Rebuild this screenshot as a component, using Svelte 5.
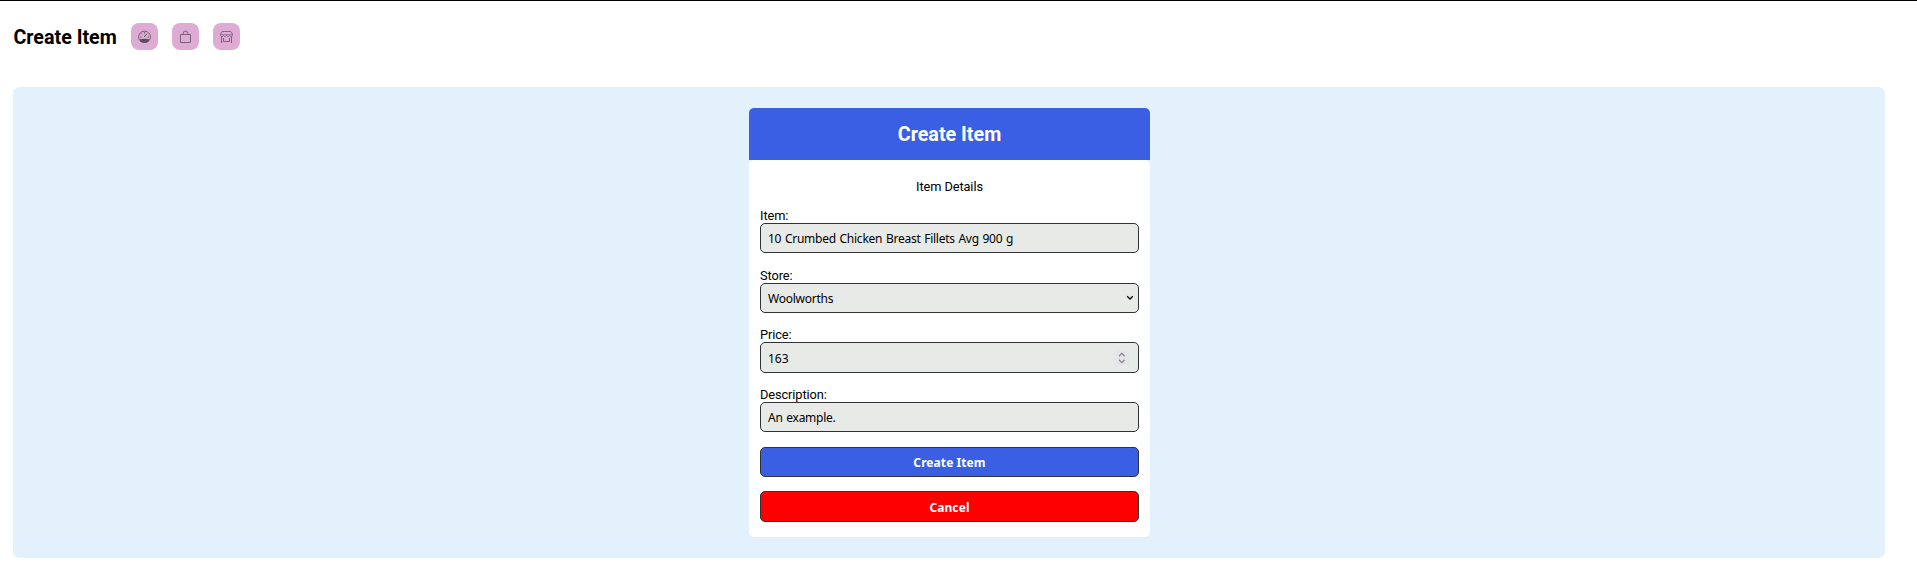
<script>
  let item = $state('10 Crumbed Chicken Breast Fillets Avg 900 g');
  let store = $state('Woolworths');
  let price = $state('163');
  let description = $state('An example.');
</script>

<div class="page">
  <header>
    <h1>Create Item</h1>
    <nav>
      <button class="nav" aria-label="Dashboard">
        <svg width="13" height="13" viewBox="0 0 13 13" fill="none" stroke="#55505c">
          <path d="M1.300 9.600A5.900 5.700 0 1 1 11.700 9.600" stroke-width=".8" />
          <path d="M1 9.400Q6.500 8 12 9.400L10.700 11.500Q9 13 6.500 13Q4 13 2.300 11.500Z" fill="#55505c" stroke="none" />
          <path d="M6.200 7 9 3.700" stroke-width="1" />
          <path d="M6.500 2v1.500M3.200 3.500l.9.900M2 7h1.500M9.700 7h1.300" stroke-width=".8" />
        </svg>
      </button>
      <button class="nav" aria-label="Items">
        <svg width="13" height="13" viewBox="0 0 13 13" fill="none" stroke="#6c5a72" stroke-width=".9">
          <path d="M1.500 4.500h10v8h-10Z" />
          <path d="M4.300 4.500V3.300a2.200 2.200 0 0 1 4.400 0v1.200" />
        </svg>
      </button>
      <button class="nav" aria-label="Stores">
        <svg width="13" height="13" viewBox="0 0 13 13" fill="none" stroke="#6c5a72">
          <path d="M2.200 1.500h8.600l1.700 2.700v1q-.4 1.200-1.500 1.200T9.500 5.500Q9.100 6.400 8 6.400T6.500 5.500Q6.100 6.400 5 6.400T3.500 5.500Q3.100 6.400 2 6.400T.5 5.200v-1Z" stroke-width=".8" />
          <path d="M.8 4.500h11.400" stroke-width=".5" />
          <path d="M1.500 6.500v6.500M11.500 6.500v6.500" stroke-width=".9" />
          <path d="M3.500 8v3.500h6V8" stroke-width=".9" />
        </svg>
      </button>
    </nav>
  </header>

  <main>
    <section class="card">
      <h2>Create Item</h2>
      <form onsubmit={(e) => e.preventDefault()}>
        <p>Item Details</p>
        <div class="field">
          <label for="item">Item:</label>
          <input id="item" bind:value={item} />
        </div>
        <div class="field">
          <label for="store">Store:</label>
          <div class="control">
            <select id="store" bind:value={store}><option>Woolworths</option></select>
            <svg class="chevron" width="8" height="6" viewBox="0 0 8 6" fill="none" stroke="#111" stroke-width="1.400">
              <path d="M1.200 1.200 4 4l2.800-2.800" />
            </svg>
          </div>
        </div>
        <div class="field price">
          <label for="price">Price:</label>
          <div class="control">
            <input id="price" inputmode="decimal" bind:value={price} />
            <svg class="spinner" width="15" height="16" viewBox="0 0 15 16" fill="none" stroke="#85828c" stroke-width="1.300">
              <rect width="15" height="16" fill="#e6e5ea" stroke="none" />
              <path d="M5 6.200 7.800 3.400l2.800 2.800M5 9.800l2.800 2.800 2.800-2.800" />
            </svg>
          </div>
        </div>
        <div class="field">
          <label for="description">Description:</label>
          <input id="description" bind:value={description} />
        </div>
        <button class="action create" type="submit">Create Item</button>
        <button class="action cancel" type="button">Cancel</button>
      </form>
    </section>
  </main>
</div>

<style>
  :global(body) {
    margin: 0;
    background: #fff;
  }
  .page {
    box-sizing: border-box;
    height: 577px;
    border-top: 1px solid #000;
    padding: 22px 32px 0 13px;
    font-family: Roboto, sans-serif;
    color: #000;
  }
  header {
    display: flex;
    align-items: center;
    gap: 14px;
    height: 27px;
    margin-bottom: 37px;
  }
  h1,
  h2 {
    margin: 0;
    font-size: 19.7px;
    font-weight: 700;
    line-height: 27px;
  }
  h1 {
    box-sizing: border-box;
    width: 104px;
    padding: 1px 0 0 0.4px;
    white-space: nowrap;
  }
  nav {
    display: flex;
    gap: 14px;
  }
  .nav {
    display: flex;
    align-items: center;
    justify-content: center;
    width: 27px;
    height: 27px;
    padding: 0;
    border: 0;
    border-radius: 8px;
    background: #ddabd3;
  }
  main {
    box-sizing: border-box;
    height: 471px;
    padding-top: 21px;
    border-radius: 7px;
    background: #e3f1fd;
  }
  .card {
    width: 401px;
    height: 429px;
    margin: 0 auto;
    position: relative;
    left: 0.5px;
    border-radius: 5px;
  }
  h2 {
    height: 52px;
    border-radius: 5px 5px 0 0;
    background: #3a5fe3;
    color: #fff;
    line-height: 54px;
    text-align: center;
  }
  form {
    box-sizing: border-box;
    height: 377px;
    padding: 19px 11px 0;
    border-radius: 5px;
    background: #fff;
  }
  p {
    margin: 0 0 13px;
    font-size: 12.8px;
    letter-spacing: -0.1px;
    line-height: 16px;
    text-align: center;
  }
  .field {
    height: 45px;
    margin-bottom: 15px;
    font-size: 12.8px;
    letter-spacing: -0.1px;
  }
  .field.price {
    height: 46px;
    margin-bottom: 14px;
  }
  .field:nth-of-type(2) {
    margin-bottom: 14px;
  }
  label {
    display: block;
    height: 15px;
    line-height: 16px;
  }
  input,
  select,
  .action {
    box-sizing: border-box;
    display: block;
    width: 379px;
    height: 30px;
    border: 1px solid #303236;
    border-radius: 5px;
    font-family: 'Noto Sans', sans-serif;
    font-size: 12px;
  }
  input,
  select {
    margin: 0;
    padding: 1px 7px 0;
    background: #e8eae7;
    color: #000;
    letter-spacing: -0.25px;
    word-spacing: 0.8px;
    appearance: none;
    outline: none;
  }
  #price {
    height: 31px;
    letter-spacing: 0;
  }
  .control {
    position: relative;
  }
  .chevron {
    position: absolute;
    right: 5px;
    top: 12px;
    pointer-events: none;
  }
  .spinner {
    position: absolute;
    right: 10px;
    top: 8px;
  }
  .action {
    padding: 1px 0 0;
    color: #fff;
    font-weight: 700;
    letter-spacing: 0.08px;
  }
  .create {
    background: #3a5fe3;
  }
  .cancel {
    height: 31px;
    margin-top: 14px;
    background: #f00;
  }
</style>
